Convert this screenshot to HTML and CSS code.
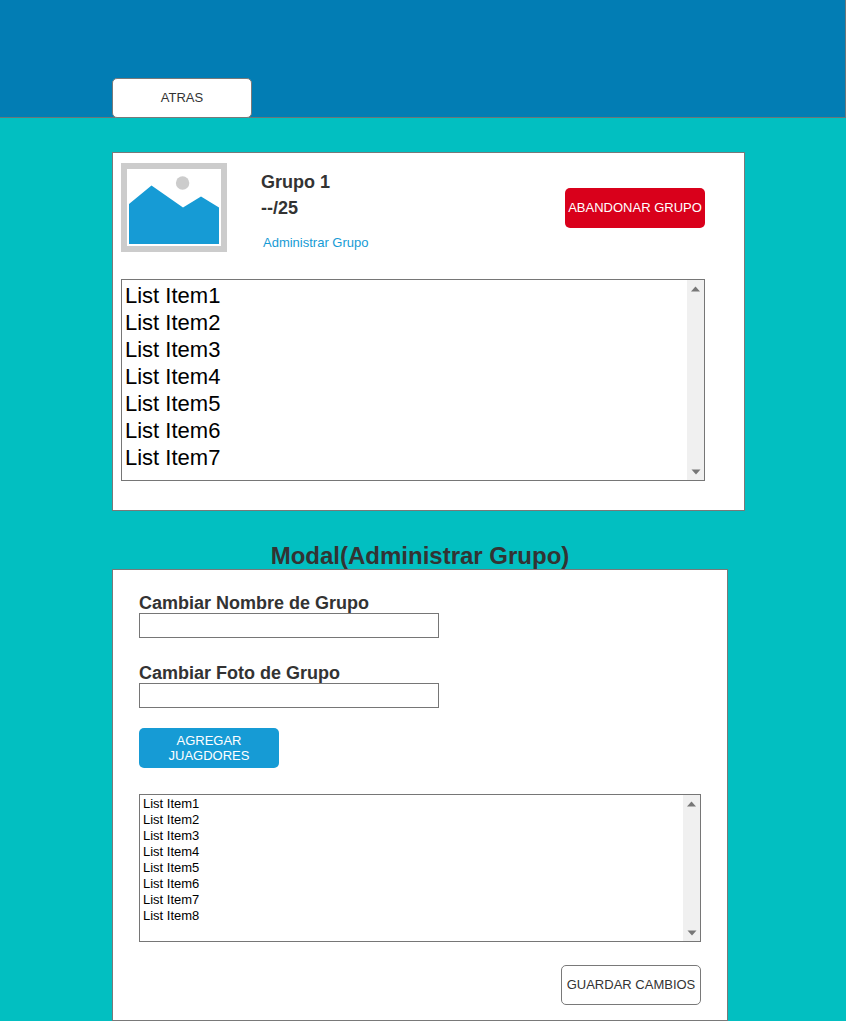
FILE: index.html
```html
<!DOCTYPE html>
<html lang="es">
<head>
<meta charset="utf-8">
<title>Grupo 1</title>
<link rel="stylesheet" href="styles.css">
</head>
<body>
<header class="topbar"><button class="btn btn-outline">ATRAS</button></header>
<main class="content">
  <section class="card group-card">
    <div class="group-head">
      <svg class="photo" width="106" height="89" viewBox="0 0 106 89">
        <rect width="106" height="89" fill="#ccc"/>
        <rect x="6" y="6" width="94" height="77" fill="#fff"/>
        <circle cx="61.6" cy="20" r="6.7" fill="#ccc"/>
        <path d="M8 41L30.500 22.500L62 44.500L80 33.500L98 44.500V81H8Z" fill="#169bd5"/>
      </svg>
      <div class="group-info">
        <h2 class="label">Grupo 1</h2>
        <p class="label count">--/25</p>
        <a class="manage">Administrar Grupo</a>
      </div>
      <button class="btn btn-danger">ABANDONAR GRUPO</button>
    </div>
    <div class="listbox list-large">
      <ul class="items">
        <li>List Item1</li><li>List Item2</li><li>List Item3</li><li>List Item4</li><li>List Item5</li><li>List Item6</li><li>List Item7</li>
      </ul>
      <div class="scrollbar">
        <svg width="10" height="6" viewBox="0 0 10 6"><path d="M0 5.500L4.500 .5L9 5.500Z"/></svg>
        <svg width="10" height="6" viewBox="0 0 10 6"><path d="M.5 .5L5 5.500L9.500 .5Z"/></svg>
      </div>
    </div>
  </section>
  <h1 class="modal-title">Modal(Administrar Grupo)</h1>
  <section class="card modal">
    <label class="label field">Cambiar Nombre de Grupo<input class="input" type="text"></label>
    <label class="label field">Cambiar Foto de Grupo<input class="input" type="text"></label>
    <button class="btn btn-primary">AGREGAR JUAGDORES</button>
    <div class="listbox list-small">
      <ul class="items">
        <li>List Item1</li><li>List Item2</li><li>List Item3</li><li>List Item4</li><li>List Item5</li><li>List Item6</li><li>List Item7</li><li>List Item8</li>
      </ul>
      <div class="scrollbar">
        <svg width="10" height="6" viewBox="0 0 10 6"><path d="M0 5.500L4.500 .5L9 5.500Z"/></svg>
        <svg width="10" height="6" viewBox="0 0 10 6"><path d="M.5 .5L5 5.500L9.500 .5Z"/></svg>
      </div>
    </div>
    <button class="btn btn-outline save">GUARDAR CAMBIOS</button>
  </section>
</main>
</body>
</html>
```

FILE: styles.css
```css
* { box-sizing: border-box; }
body {
  margin: 0;
  background: #02bfc1;
  color: #333;
  font: 13px/15px "Liberation Sans", Arial, sans-serif;
}
h1, h2, p, ul { margin: 0; padding: 0; }
.topbar {
  height: 118px;
  padding-left: 112px;
  display: flex;
  align-items: flex-end;
  background: #027db4;
  border: solid #6b7678;
  border-width: 0 1px 1px 0;
}
.topbar .btn { margin-bottom: -1px; }
.content { padding: 34px 0 0 112px; }
.card { background: #fff; border: 1px solid #797979; }
.btn {
  width: 140px;
  height: 40px;
  padding: 0 2px 2px;
  border: 0;
  border-radius: 5px;
  font: inherit;
  color: #fff;
}
.btn-outline { background: #fff; border: 1px solid #797979; color: #333; }
.btn-danger { background: #d9001b; margin: 25px 0 0 auto; white-space: nowrap; }
.btn-primary { background: #169bd5; padding: 0 20px; }
.group-card { width: 633px; height: 359px; padding: 10px 39px 0 8px; }
.group-head { display: flex; align-items: flex-start; height: 116px; }
.group-info { padding: 9px 0 0 34px; }
.label { display: block; font-size: 18px; line-height: 20px; font-weight: 700; }
.count { margin-top: 6px; }
.manage { display: block; margin: 17px 0 0 2px; color: #169bd5; }
.listbox { display: flex; justify-content: space-between; border: 1px solid #767676; background: #fff; color: #000; }
.items { list-style: none; padding: 1px 3px; }
.list-large { height: 202px; font-size: 22px; line-height: 27px; }
.list-large .items { padding-top: 2px; }
.list-small { height: 148px; margin-top: 26px; line-height: 16px; }
.scrollbar {
  width: 17px;
  padding: 6px 0 5px 4px;
  display: flex;
  flex-direction: column;
  justify-content: space-between;
  background: #f0f0f0;
  fill: #777;
}
.modal-title { width: 616px; height: 58px; padding-top: 31px; text-align: center; font-size: 24px; line-height: 27px; }
.modal { width: 616px; height: 452px; padding: 23px 26px 0; }
.field { height: 70px; }
.input { display: block; width: 300px; height: 25px; padding: 2px; border: 1px solid #767676; background: #fff; }
.modal > .btn { display: block; }
.modal .btn-primary { margin-top: -5px; }
.save { margin: 23px 0 0 auto; }
```
